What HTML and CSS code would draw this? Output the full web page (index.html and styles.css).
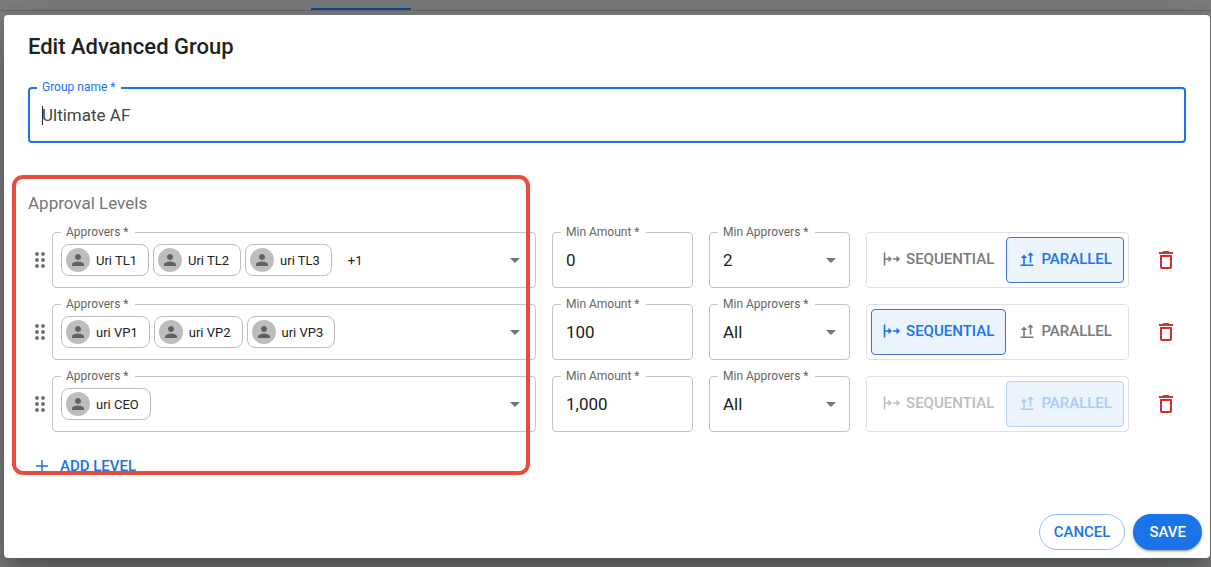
FILE: index.html
```html
<!DOCTYPE html>
<html lang="en">
<head>
    <meta charset="UTF-8">
    <meta name="viewport" content="width=device-width, initial-scale=1.0">
    <title>Edit Advanced Group</title>
    <link rel="stylesheet" href="styles.css">
</head>
<body>
    <!-- Shared icons -->
    <svg class="sprite" aria-hidden="true">
        <symbol id="drag" viewBox="0 0 24 24"><path d="M11 18c0 1.1-.9 2-2 2s-2-.9-2-2 .9-2 2-2 2 .9 2 2zm-2-8c-1.1 0-2 .9-2 2s.9 2 2 2 2-.9 2-2-.9-2-2-2zm0-6c-1.1 0-2 .9-2 2s.9 2 2 2 2-.9 2-2-.9-2-2-2zm6 4c1.1 0 2-.9 2-2s-.9-2-2-2-2 .9-2 2 .9 2 2 2zm0 2c-1.1 0-2 .9-2 2s.9 2 2 2 2-.9 2-2-.9-2-2-2zm0 6c-1.1 0-2 .9-2 2s.9 2 2 2 2-.9 2-2-.9-2-2-2z"/></symbol>
        <symbol id="person" viewBox="0 0 24 24"><path d="M12 12c2.21 0 4-1.79 4-4s-1.79-4-4-4-4 1.79-4 4 1.79 4 4 4zm0 2c-2.67 0-8 1.34-8 4v2h16v-2c0-2.66-5.33-4-8-4z"/></symbol>
        <symbol id="arrow" viewBox="0 0 24 24"><path d="M7 10l5 5 5-5z"/></symbol>
        <symbol id="trash" viewBox="0 0 24 24"><path d="M6 19c0 1.1.9 2 2 2h8c1.1 0 2-.9 2-2V7H6v12zM8 9h8v10H8V9zm7.5-5l-1-1h-5l-1 1H5v2h14V4z"/></symbol>
        <symbol id="sequential" viewBox="0 0 18 14">
            <path d="M1.5 .5v13M1.5 7H8M10 7h6" fill="none" stroke="currentColor" stroke-width="1.6"/>
            <path d="M5.5 3.8L9 7l-3.500 3.200zM13.500 3.800L17.200 7l-3.700 3.200z"/>
        </symbol>
        <symbol id="parallel" viewBox="-2 0 18 14">
            <path d="M.5 13.200h13M4 13V5M10.500 10.500V3" fill="none" stroke="currentColor" stroke-width="1.600"/>
            <path d="M.8 6L4 2.600 7.200 6zM7.300 3.600L10.500 .2l3.200 3.400z"/>
        </symbol>
    </svg>

    <div class="tabs"><div class="tab-active"></div></div>

    <div class="dialog" role="dialog" aria-labelledby="dialogTitle">
        <form>
            <h2 id="dialogTitle">Edit Advanced Group</h2>
            <div class="field field-focused">
                <label for="groupName">Group name *</label>
                <input type="text" id="groupName" value="Ultimate AF">
                <span class="caret"></span>
            </div>

            <section class="levels">
                <h3>Approval Levels</h3>

                <div class="level">
                    <svg class="drag"><use href="#drag"/></svg>
                    <div class="field field-chips">
                        <label for="approvers1">Approvers *</label>
                        <button type="button" id="approvers1" class="chips" aria-haspopup="listbox">
                            <span class="chip"><span class="avatar"><svg><use href="#person"/></svg></span>Uri TL1</span>
                            <span class="chip"><span class="avatar"><svg><use href="#person"/></svg></span>Uri TL2</span>
                            <span class="chip"><span class="avatar"><svg><use href="#person"/></svg></span>uri TL3</span>
                            <span class="more">+1</span>
                        </button>
                        <svg class="arrow"><use href="#arrow"/></svg>
                    </div>
                    <div class="field">
                        <label for="amount1">Min Amount *</label>
                        <input type="text" id="amount1" value="0">
                    </div>
                    <div class="field">
                        <label for="min1">Min Approvers *</label>
                        <select id="min1"><option>2</option><option>All</option></select>
                        <svg class="arrow"><use href="#arrow"/></svg>
                    </div>
                    <div class="toggle">
                        <button type="button"><svg><use href="#sequential"/></svg>SEQUENTIAL</button>
                        <button type="button" class="selected"><svg><use href="#parallel"/></svg>PARALLEL</button>
                    </div>
                    <button type="button" class="delete" aria-label="Delete level"><svg><use href="#trash"/></svg></button>
                </div>

                <div class="level">
                    <svg class="drag"><use href="#drag"/></svg>
                    <div class="field field-chips">
                        <label for="approvers2">Approvers *</label>
                        <button type="button" id="approvers2" class="chips" aria-haspopup="listbox">
                            <span class="chip"><span class="avatar"><svg><use href="#person"/></svg></span>uri VP1</span>
                            <span class="chip"><span class="avatar"><svg><use href="#person"/></svg></span>uri VP2</span>
                            <span class="chip"><span class="avatar"><svg><use href="#person"/></svg></span>uri VP3</span>
                        </button>
                        <svg class="arrow"><use href="#arrow"/></svg>
                    </div>
                    <div class="field">
                        <label for="amount2">Min Amount *</label>
                        <input type="text" id="amount2" value="100">
                    </div>
                    <div class="field">
                        <label for="min2">Min Approvers *</label>
                        <select id="min2"><option>All</option></select>
                        <svg class="arrow"><use href="#arrow"/></svg>
                    </div>
                    <div class="toggle">
                        <button type="button" class="selected"><svg><use href="#sequential"/></svg>SEQUENTIAL</button>
                        <button type="button"><svg><use href="#parallel"/></svg>PARALLEL</button>
                    </div>
                    <button type="button" class="delete" aria-label="Delete level"><svg><use href="#trash"/></svg></button>
                </div>

                <div class="level">
                    <svg class="drag"><use href="#drag"/></svg>
                    <div class="field field-chips">
                        <label for="approvers3">Approvers *</label>
                        <button type="button" id="approvers3" class="chips" aria-haspopup="listbox">
                            <span class="chip"><span class="avatar"><svg><use href="#person"/></svg></span>uri CEO</span>
                        </button>
                        <svg class="arrow"><use href="#arrow"/></svg>
                    </div>
                    <div class="field">
                        <label for="amount3">Min Amount *</label>
                        <input type="text" id="amount3" value="1,000">
                    </div>
                    <div class="field">
                        <label for="min3">Min Approvers *</label>
                        <select id="min3"><option>All</option></select>
                        <svg class="arrow"><use href="#arrow"/></svg>
                    </div>
                    <div class="toggle">
                        <button type="button" disabled><svg><use href="#sequential"/></svg>SEQUENTIAL</button>
                        <button type="button" class="selected" disabled><svg><use href="#parallel"/></svg>PARALLEL</button>
                    </div>
                    <button type="button" class="delete" aria-label="Delete level"><svg><use href="#trash"/></svg></button>
                </div>

                <button type="button" class="add-level">
                    <svg viewBox="0 0 12 12"><path d="M6 0v12M0 6h12" stroke="currentColor" stroke-width="1.5"/></svg>
                    ADD LEVEL
                </button>
                <div class="highlight"></div>
            </section>

            <div class="actions">
                <button type="button" class="cancel">CANCEL</button>
                <button type="submit" class="save">SAVE</button>
            </div>
        </form>
    </div>
</body>
</html>
```
FILE: styles.css
```css
* {
    box-sizing: border-box;
}
body {
    margin: 0;
    background-color: #7b7c7e;
    color: #212121;
    font-family: Roboto, "Liberation Sans", sans-serif;
    font-size: 16px;
    overflow: hidden;
}
button, input, select {
    font-family: inherit;
    color: inherit;
    margin: 0;
}
button {
    background: none;
    border: none;
    padding: 0;
    cursor: pointer;
}
svg {
    fill: currentColor;
    flex: none;
}
.sprite {
    position: absolute;
    width: 0;
    height: 0;
}

/* Page behind the dialog */
.tabs {
    height: 11px;
    padding: 8px 0 0 311px;
    border-bottom: 1px solid #69696a;
}
.tab-active {
    width: 100px;
    height: 2px;
    background-color: #0d4a96;
}

.dialog {
    margin: 4px 1px 9px 4px;
    background-color: #fff;
    border-radius: 4px;
    box-shadow: 0 11px 15px -7px rgba(0, 0, 0, 0.2), 0 24px 38px 3px rgba(0, 0, 0, 0.14), 0 9px 46px 8px rgba(0, 0, 0, 0.12);
    padding: 16px 24px 8px;
}
h2 {
    margin: 0 0 24px;
    font-size: 22px;
    font-weight: 500;
    line-height: 32px;
}
h3 {
    margin: 0 0 18px;
    font-size: 17px;
    font-weight: 400;
    line-height: 22px;
    color: #757575;
}

/* Outlined fields */
.field {
    position: relative;
    display: flex;
    height: 56px;
    border: 1px solid #c4c4c4;
    border-radius: 4px;
}
.field label {
    position: absolute;
    top: -9px;
    left: 8px;
    padding: 0 6px 0 5px;
    background-color: #fff;
    font-size: 12px;
    line-height: 16px;
    color: #666;
    white-space: nowrap;
}
.field input, .field select {
    width: 100%;
    padding: 0 13px;
    border: none;
    outline: none;
    background: none;
    appearance: none;
    font-size: 17px;
}
.field .arrow {
    position: absolute;
    top: 15px;
    right: 6px;
    width: 24px;
    height: 24px;
    color: #757575;
    pointer-events: none;
}
.field-focused {
    border: 2px solid #1a73e8;
    margin-bottom: 49px;
}
.field-focused label {
    top: -10px;
    left: 7px;
    color: #1a73e8;
}
.field-focused input {
    padding: 0 12px;
    color: #444;
}
.caret {
    position: absolute;
    top: 17px;
    left: 12px;
    width: 1px;
    height: 19px;
    background-color: #222;
}

/* Approval levels */
.levels {
    position: relative;
}
.level {
    display: grid;
    grid-template-columns: 24px 1fr 141px 141px 263px 41px;
    column-gap: 16px;
    align-items: center;
    margin-bottom: 16px;
}
.drag {
    width: 24px;
    height: 24px;
    color: #757575;
}
.field-chips {
    margin-left: -16px;
}
.chips {
    display: flex;
    flex: 1;
    align-items: center;
    gap: 4px;
    padding: 0 8px;
}
.chip {
    display: flex;
    align-items: center;
    gap: 6px;
    height: 32px;
    padding: 0 11px 0 4px;
    border: 1px solid #bdbdbd;
    border-radius: 8px;
    font-size: 13px;
}
.avatar {
    display: flex;
    align-items: center;
    justify-content: center;
    width: 24px;
    height: 24px;
    border-radius: 50%;
    background-color: #bdbdbd;
    color: #616161;
}
.avatar svg {
    width: 18px;
    height: 18px;
}
.more {
    padding-left: 12px;
    font-size: 13px;
}
.field-chips .arrow {
    right: 8px;
}
.toggle {
    display: flex;
    height: 56px;
    padding: 4px;
    border: 1px solid #e0e0e0;
    border-radius: 4px;
}
.toggle button {
    display: flex;
    flex: 1 1 auto;
    align-items: center;
    justify-content: center;
    gap: 5px;
    padding-bottom: 2px;
    border: 1px solid transparent;
    border-radius: 4px;
    font-size: 15px;
    font-weight: 500;
    color: #7a7a7a;
}
.toggle .selected {
    background-color: #ebf3fd;
    border-color: #3f73c4;
    color: #1a73e8;
}
.toggle button:disabled {
    color: #bdbdbd;
}
.toggle .selected:disabled {
    border-color: #b9d1f3;
    color: #a6cbfa;
}
.toggle svg {
    width: 18px;
    height: 14px;
}
.delete {
    display: flex;
    align-items: center;
    justify-content: center;
    height: 40px;
    color: #d32f2f;
}
.delete svg {
    width: 24px;
    height: 24px;
}
.add-level {
    display: flex;
    align-items: center;
    gap: 12px;
    height: 36px;
    padding: 0 8px;
    font-size: 15px;
    font-weight: 500;
    color: #1a73e8;
}
.add-level svg {
    width: 12px;
    height: 12px;
}
.highlight {
    position: absolute;
    top: -17px;
    left: -16px;
    width: 518px;
    height: 300px;
    border: 4px solid #e74c3c;
    border-radius: 11px;
    pointer-events: none;
}

.actions {
    display: flex;
    justify-content: flex-end;
    gap: 8px;
    margin: 30px -16px 0 0;
}
.actions button {
    height: 36px;
    padding: 0 16px;
    border-radius: 18px;
    font-size: 15px;
    font-weight: 500;
}
.actions .cancel {
    padding: 0 14px;
    border: 1px solid #90bdf7;
    color: #1a73e8;
}
.actions .save {
    background-color: #1a73e8;
    color: #fff;
    box-shadow: 0 3px 1px -2px rgba(0, 0, 0, 0.2), 0 2px 2px rgba(0, 0, 0, 0.14), 0 1px 5px rgba(0, 0, 0, 0.12);
}
```
